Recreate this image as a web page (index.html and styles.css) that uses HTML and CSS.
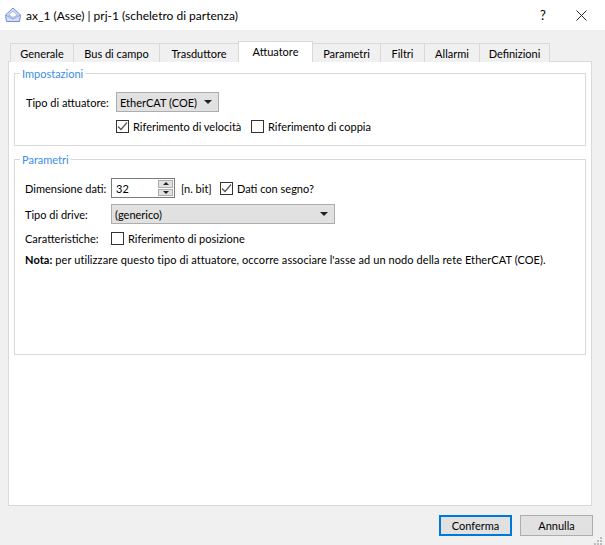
FILE: index.html
```html
<!DOCTYPE html>
<html lang="it">
<head>
    <meta charset="UTF-8">
    <title>ax_1 (Asse) | prj-1 (scheletro di partenza)</title>
    <link rel="stylesheet" href="styles.css">
</head>
<body>
    <div class="window">
        <div class="titlebar">
            <svg class="app-icon" width="17" height="16" viewBox="0 0 17 16">
                <path d="M0.5 8 L8 1 L15.5 8 L14.5 14.5 H1.5 Z" fill="#d3dcf8" stroke="#6f8fdc"/>
                <path d="M3.5 8 L8 4 L12.5 8 L8 10.5 Z" fill="#fff" stroke="#aab4c8"/>
                <path d="M0.5 8 L8 12 L15.5 8" fill="none" stroke="#8aa4e4"/>
            </svg>
            <span class="title">ax_1 (Asse) | prj-1 (scheletro di partenza)</span>
            <span class="help">?</span>
            <svg class="close" width="11" height="11" viewBox="0 0 11 11">
                <path d="M0.5 0.5 L10.5 10.5 M10.5 0.5 L0.5 10.5" stroke="#222" fill="none"/>
            </svg>
        </div>

        <div class="content">
            <div class="tabs">
                <div class="tab w-generale">Generale</div>
                <div class="tab w-bus">Bus di campo</div>
                <div class="tab w-trasd">Trasduttore</div>
                <div class="tab active w-attu">Attuatore</div>
                <div class="tab w-param">Parametri</div>
                <div class="tab w-filtri">Filtri</div>
                <div class="tab w-allarmi">Allarmi</div>
                <div class="tab w-def">Definizioni</div>
            </div>

            <div class="pane">
                <div class="group group-imp">
                    <span class="legend">Impostazioni</span>
                    <div class="row row-tipo">
                        <label>Tipo di attuatore:</label>
                        <div class="combo combo-small">EtherCAT (COE)<span class="arrow"></span></div>
                    </div>
                    <div class="row row-rif">
                        <span class="check checked"><svg width="11" height="11" viewBox="0 0 11 11"><path d="M1 5.5 L4 8.5 L10 1.5" fill="none" stroke="#555" stroke-width="1.2"/></svg></span>
                        <span class="check-label rif-vel">Riferimento di velocità</span>
                        <span class="check"></span>
                        <span class="check-label">Riferimento di coppia</span>
                    </div>
                </div>

                <div class="group group-par">
                    <span class="legend">Parametri</span>
                    <div class="row row-dim">
                        <label class="par-label">Dimensione dati:</label>
                        <div class="spin">
                            <span class="spin-value">32</span>
                            <div class="spin-btns">
                                <span class="spin-btn"><i class="up"></i></span>
                                <span class="spin-btn"><i class="down"></i></span>
                            </div>
                        </div>
                        <span class="unit">[n. bit]</span>
                        <span class="check checked"><svg width="11" height="11" viewBox="0 0 11 11"><path d="M1 5.5 L4 8.5 L10 1.5" fill="none" stroke="#555" stroke-width="1.2"/></svg></span>
                        <span class="check-label">Dati con segno?</span>
                    </div>
                    <div class="row row-drive">
                        <label class="par-label">Tipo di drive:</label>
                        <div class="combo combo-wide">(generico)<span class="arrow"></span></div>
                    </div>
                    <div class="row row-car">
                        <label class="par-label">Caratteristiche:</label>
                        <span class="check"></span>
                        <span class="check-label">Riferimento di posizione</span>
                    </div>
                    <p class="note"><b>Nota:</b> per utilizzare questo tipo di attuatore, occorre associare l'asse ad un nodo della rete EtherCAT (COE).</p>
                </div>
            </div>

            <div class="buttons">
                <button class="btn default">Conferma</button>
                <button class="btn">Annulla</button>
            </div>
            <svg class="grip" width="8" height="8" viewBox="0 0 8 8" fill="#bcbcbc">
                <rect x="6" y="0" width="2" height="2"/>
                <rect x="3" y="3" width="2" height="2"/><rect x="6" y="3" width="2" height="2"/>
                <rect x="0" y="6" width="2" height="2"/><rect x="3" y="6" width="2" height="2"/><rect x="6" y="6" width="2" height="2"/>
            </svg>
        </div>
    </div>
</body>
</html>
```

FILE: styles.css
```css
* {
    box-sizing: border-box;
}

html, body {
    margin: 0;
    height: 100%;
}

body {
    font-family: "Lato", "Open Sans", sans-serif;
    font-size: 11px;
    color: #000;
    background: #f0f0f0;
    overflow: hidden;
    white-space: nowrap;
}

.window {
    height: 545px;
    display: flex;
    flex-direction: column;
}

.titlebar {
    height: 30px;
    flex: none;
    background: #fff;
    display: flex;
    align-items: center;
    padding-left: 5px;
    font-size: 12px;
}

.app-icon {
    margin-right: 4px;
}

.title {
    flex: 1;
}

.help {
    font-size: 13px;
    width: 12px;
    text-align: center;
    margin-right: 27px;
}

.close {
    margin-right: 18px;
}

.content {
    flex: 1;
    position: relative;
    padding: 11px 13px 0 8px;
    display: flex;
    flex-direction: column;
}

.tabs {
    display: flex;
    height: 21px;
    padding-left: 2px;
    align-items: flex-end;
    position: relative;
    z-index: 1;
    margin-bottom: -1px;
}

.tab {
    height: 19px;
    border: 1px solid #d9d9d9;
    border-bottom: none;
    border-left: none;
    background: #f0f0f0;
    display: flex;
    align-items: center;
    justify-content: center;
}

.tab:first-child {
    border-left: 1px solid #d9d9d9;
}

.tab.active {
    height: 21px;
    background: #fff;
    border-left: 1px solid #d9d9d9;
    margin-left: -1px;
    padding-bottom: 1px;
}

.w-generale { width: 64px; }
.w-bus { width: 86px; }
.w-trasd { width: 79px; }
.w-attu { width: 75px; }
.w-param { width: 68px; }
.w-filtri { width: 44px; }
.w-allarmi { width: 55px; }
.w-def { width: 70px; }

.pane {
    height: 445px;
    background: #fff;
    border: 1px solid #d9d9d9;
    padding: 11px 5px 0;
}

.group {
    position: relative;
    border: 1px solid #d9d9d9;
}

.group-imp {
    height: 73px;
    margin-bottom: 13px;
    padding: 18px 0 0 11px;
}

.group-par {
    height: 196px;
    padding: 18px 0 0 10px;
}

.legend {
    position: absolute;
    top: -8px;
    left: 5px;
    padding: 0 2px;
    background: #fff;
    color: #3a8ee6;
    line-height: 15px;
}

.row {
    display: flex;
    align-items: center;
}

.row-tipo {
    height: 20px;
}

.row-tipo label {
    width: 90px;
}

.row-rif {
    margin: 8px 0 0 90px;
}

.rif-vel {
    width: 118px;
}

.check {
    width: 13px;
    height: 13px;
    border: 1px solid #333;
    background: #fff;
    display: flex;
    align-items: center;
    justify-content: center;
    flex: none;
    margin-right: 4px;
}

.combo {
    height: 20px;
    border: 1px solid #adadad;
    background: #e1e1e1;
    display: flex;
    align-items: center;
    justify-content: space-between;
    padding: 0 6px 0 3px;
}

.combo-small {
    width: 103px;
}

.combo-wide {
    width: 224px;
}

.arrow {
    width: 0;
    height: 0;
    border-left: 4px solid transparent;
    border-right: 4px solid transparent;
    border-top: 4px solid #222;
}

.par-label {
    width: 86px;
    flex: none;
}

.row-dim {
    height: 20px;
}

.spin {
    width: 64px;
    height: 20px;
    border: 1px solid #7a7a7a;
    background: #fff;
    display: flex;
    justify-content: space-between;
    padding: 1px;
}

.spin-value {
    padding: 2px 0 0 3px;
}

.spin-btns {
    width: 15px;
    display: flex;
    flex-direction: column;
    gap: 1px;
}

.spin-btn {
    flex: 1;
    background: #e1e1e1;
    border: 1px solid #adadad;
    display: flex;
    align-items: center;
    justify-content: center;
}

.spin-btn i {
    width: 0;
    height: 0;
    border-left: 3px solid transparent;
    border-right: 3px solid transparent;
}

.spin-btn .up {
    border-bottom: 3px solid #222;
}

.spin-btn .down {
    border-top: 3px solid #222;
}

.unit {
    width: 39px;
    margin-left: 6px;
}

.row-drive {
    margin-top: 6px;
}

.row-car {
    margin-top: 8px;
}

.note {
    margin: 8px 0 0;
    letter-spacing: 0.08px;
}

.note b {
    font-weight: 700;
}

.buttons {
    display: flex;
    justify-content: flex-end;
    gap: 8px;
    margin-top: 9px;
    margin-right: -1px;
}

.btn {
    width: 73px;
    height: 21px;
    border: 1px solid #adadad;
    background: #e1e1e1;
    font: inherit;
    color: #000;
    padding: 0;
}

.btn.default {
    border: 2px solid #0078d7;
}

.grip {
    position: absolute;
    right: 3px;
    bottom: 0;
}
```
